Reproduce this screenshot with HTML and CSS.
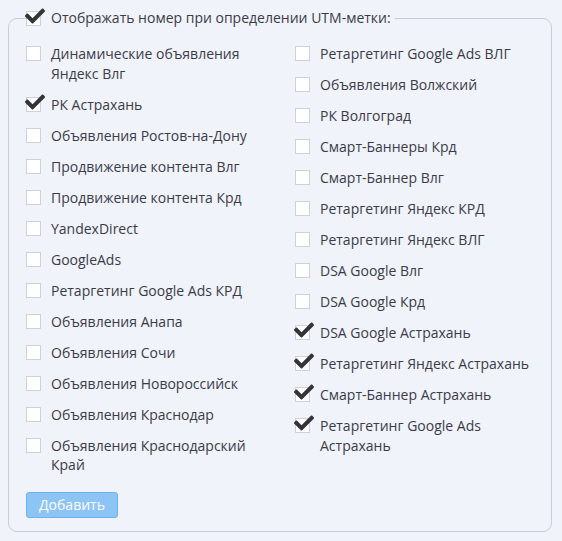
FILE: index.html
```html
<!DOCTYPE html>
<html lang="ru">
<head>
<meta charset="utf-8">
<link rel="stylesheet" href="styles.css">
</head>
<body>
<svg width="0" height="0" class="defs" aria-hidden="true">
  <symbol id="check" viewBox="0 0 512 512">
    <path d="M173.898 439.404l-166.4-166.4c-9.997-9.997-9.997-26.206 0-36.204l36.203-36.204c9.997-9.998 26.207-9.998 36.204 0L192 312.69 432.095 72.596c9.997-9.997 26.207-9.997 36.204 0l36.203 36.204c9.997 9.997 9.997 26.206 0 36.204l-294.4 294.401c-9.998 9.997-26.207 9.997-36.204-.001z"/>
  </symbol>
</svg>
<fieldset class="utm">
  <legend class="legend">
    <label class="item checked"><span class="box"><svg class="tick"><use href="#check"/></svg></span><span class="txt">Отображать номер при определении UTM-метки:</span></label>
  </legend>
  <div class="cols">
    <div class="col">
      <label class="item"><span class="box"></span><span class="txt">Динамические объявления<br>Яндекс Влг</span></label>
      <label class="item checked"><span class="box"><svg class="tick"><use href="#check"/></svg></span><span class="txt">РК Астрахань</span></label>
      <label class="item"><span class="box"></span><span class="txt">Объявления Ростов-на-Дону</span></label>
      <label class="item"><span class="box"></span><span class="txt">Продвижение контента Влг</span></label>
      <label class="item"><span class="box"></span><span class="txt">Продвижение контента Крд</span></label>
      <label class="item"><span class="box"></span><span class="txt">YandexDirect</span></label>
      <label class="item"><span class="box"></span><span class="txt">GoogleAds</span></label>
      <label class="item"><span class="box"></span><span class="txt">Ретаргетинг Google Ads КРД</span></label>
      <label class="item"><span class="box"></span><span class="txt">Объявления Анапа</span></label>
      <label class="item"><span class="box"></span><span class="txt">Объявления Сочи</span></label>
      <label class="item"><span class="box"></span><span class="txt">Объявления Новороссийск</span></label>
      <label class="item"><span class="box"></span><span class="txt">Объявления Краснодар</span></label>
      <label class="item"><span class="box"></span><span class="txt">Объявления Краснодарский<br>Край</span></label>
    </div>
    <div class="col">
      <label class="item"><span class="box"></span><span class="txt">Ретаргетинг Google Ads ВЛГ</span></label>
      <label class="item"><span class="box"></span><span class="txt">Объявления Волжский</span></label>
      <label class="item"><span class="box"></span><span class="txt">РК Волгоград</span></label>
      <label class="item"><span class="box"></span><span class="txt">Смарт-Баннеры Крд</span></label>
      <label class="item"><span class="box"></span><span class="txt">Смарт-Баннер Влг</span></label>
      <label class="item"><span class="box"></span><span class="txt">Ретаргетинг Яндекс КРД</span></label>
      <label class="item"><span class="box"></span><span class="txt">Ретаргетинг Яндекс ВЛГ</span></label>
      <label class="item"><span class="box"></span><span class="txt">DSA Google Влг</span></label>
      <label class="item"><span class="box"></span><span class="txt">DSA Google Крд</span></label>
      <label class="item checked"><span class="box"><svg class="tick"><use href="#check"/></svg></span><span class="txt">DSA Google Астрахань</span></label>
      <label class="item checked"><span class="box"><svg class="tick"><use href="#check"/></svg></span><span class="txt">Ретаргетинг Яндекс Астрахань</span></label>
      <label class="item checked"><span class="box"><svg class="tick"><use href="#check"/></svg></span><span class="txt">Смарт-Баннер Астрахань</span></label>
      <label class="item checked"><span class="box"><svg class="tick"><use href="#check"/></svg></span><span class="txt">Ретаргетинг Google Ads<br>Астрахань</span></label>
    </div>
  </div>
  <button class="add" type="button">Добавить</button>
</fieldset>
</body>
</html>
```
FILE: styles.css
```css
html, body {
  margin: 0;
  background: #f0f3fa;
}
body {
  padding: 8px;
  font-family: "Open Sans", "Liberation Sans", sans-serif;
  font-size: 14px;
  line-height: 19.5px;
  color: #3b3b48;
}
.defs {
  position: absolute;
  width: 0;
  height: 0;
}
.utm {
  margin: 0;
  width: 508px;
  border: 1px solid #c9cdd6;
  border-radius: 9px;
  padding: 16px 17px 13px 17px;
  min-width: 0;
}
.legend {
  padding: 0 4px 0 0;
  margin-left: 0;
  line-height: 20px;
}
.cols {
  display: grid;
  grid-template-columns: 269px 1fr;
}
.col {
  display: flex;
  flex-direction: column;
  gap: 11.5px;
}
.item {
  display: flex;
  align-items: flex-start;
  gap: 10px;
}
.box {
  position: relative;
  flex: none;
  width: 13px;
  height: 13px;
  margin-top: 2px;
  background: #fff;
  border: 1px solid #cdd1d9;
}
.legend .box {
  margin-top: 3px;
}
.tick {
  position: absolute;
  left: -2px;
  top: -6px;
  width: 20px;
  height: 20px;
  fill: #333338;
}
.add {
  display: block;
  margin-top: 17px;
  width: 92px;
  height: 26px;
  padding: 0;
  font-family: "Open Sans", "Liberation Sans", sans-serif;
  font-size: 14px;
  color: #fff;
  background: #8cc4f5;
  border: 1px solid #6eb0ea;
  border-radius: 3px;
}
```
